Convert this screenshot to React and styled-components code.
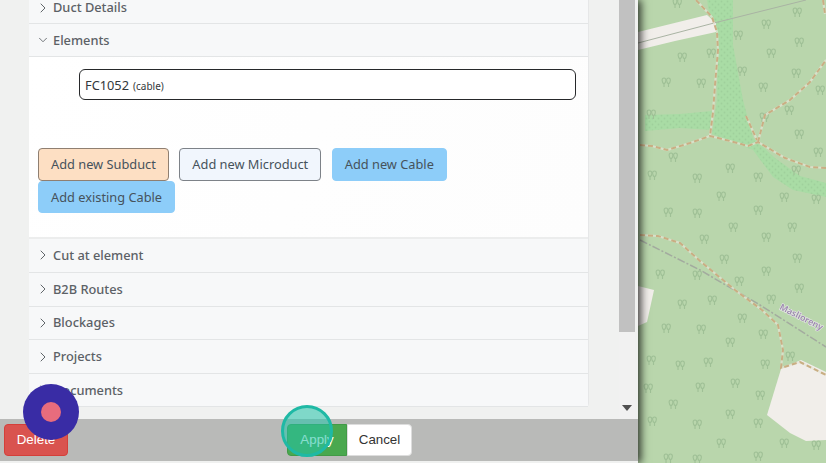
import React from "react";
import styled, { createGlobalStyle } from "styled-components";
import { ChevronRight, ChevronDown } from "lucide-react";

const TREES = [
  [677, 3], [797, 12], [766, 24], [738, 35], [799, 42], [771, 53], [682, 57], [711, 53], [742, 71], [796, 73],
  [666, 82], [701, 83], [763, 87], [820, 90], [651, 114], [789, 110], [764, 117], [799, 134], [818, 152], [673, 157],
  [730, 168], [796, 170], [652, 175], [697, 178], [758, 177], [721, 196], [784, 197], [816, 199], [668, 212], [697, 213],
  [758, 210], [792, 227], [733, 227], [704, 239], [766, 237], [724, 259], [797, 258], [660, 274], [697, 275], [766, 271],
  [739, 281], [799, 288], [771, 299], [682, 304], [712, 300], [742, 318], [666, 328], [701, 329], [763, 334], [730, 342],
  [790, 356], [651, 360], [680, 365], [708, 362], [765, 364], [735, 383], [700, 387], [760, 395], [648, 388], [673, 404],
  [730, 414], [652, 421], [697, 424], [758, 423], [721, 443], [784, 443], [816, 445], [668, 458], [697, 459], [758, 456],
];

const TRACKS = [
  "M696 0 L712 17 L717 32 L718 50 L715 85 L713 112 L710 136",
  "M640 145 L652 146 L667 150 L690 143 L710 136 L730 141 L748 146 L758 142 L785 158 L810 167 L826 168",
  "M758 142 L765 115 L790 100 L810 82 L826 60",
  "M746 116 L757 140",
  "M640 235 L658 236 L680 243 L700 261 L735 290 L762 310 L778 325 L783 350 L781 368 L800 362 L826 375",
  "M823 0 L825 14",
];

const GlobalStyle = createGlobalStyle`
  html, body {
    margin: 0;
    height: 100%;
    overflow: hidden;
    font-family: "Noto Sans", "Open Sans", sans-serif;
  }
`;

const Page = styled.div`
  display: flex;
  width: 826px;
  height: 463px;
  position: relative;
  overflow: hidden;
`;

const Panel = styled.section`
  width: 638px;
  flex: none;
  display: flex;
  flex-direction: column;
  background: #f0f1f0;
  box-shadow: 3px 0 8px rgba(0, 0, 0, 0.75);
  z-index: 1;
`;

const Body = styled.div`
  flex: 1;
  min-height: 0;
  display: flex;
  overflow: hidden;
`;

const Content = styled.div`
  width: 619px;
  flex: none;
  padding-left: 29px;
  box-sizing: border-box;
`;

const Accordion = styled.div`
  width: 560px;
  background: #fff;
  border-radius: 0 0 4px 4px;
  border-right: 1px solid #e6e7e8;
  box-sizing: border-box;
`;

const Header = styled.div`
  height: ${(props) => props.$height || 33.75}px;
  padding-bottom: ${(props) => props.$cut || 0}px;
  box-sizing: border-box;
  display: flex;
  align-items: center;
  gap: 2px;
  padding-left: 6px;
  background: #f7f8f9;
  border-bottom: 1px solid #e3e5e6;
  color: #5c6166;
  font-size: 12.8px;
  line-height: 1;
  font-weight: 500;
`;

const Chevron = styled.span`
  width: 16px;
  flex: none;
  display: flex;
  align-items: center;
  justify-content: center;
  color: #555a5f;
`;

const ElementsBody = styled.div`
  height: 182px;
  box-sizing: border-box;
  padding: 12px 12px 0 9px;
  background: linear-gradient(110deg, #ffffff, #fdfdfd);
  border-bottom: 2px solid #eceded;
`;

const ElementRow = styled.div`
  margin-left: 41px;
  height: 31px;
  box-sizing: border-box;
  display: flex;
  align-items: baseline;
  gap: 4px;
  padding: 7px 5px 0;
  border: 1.5px solid #26282a;
  border-radius: 6px;
  background: #fff;
  color: #33373b;
  font-size: 12.8px;
  line-height: 17px;
`;

const ElementType = styled.span`
  font-size: 10px;
`;

const ButtonRow = styled.div`
  display: flex;
  flex-wrap: wrap;
  column-gap: 10.5px;
  margin-top: 48px;
`;

const VARIANTS = {
  subduct: "background: #fddfc3; border: 1px solid #8f7f71;",
  microduct: "background: #f1f6fd; border: 1px solid #7d8288;",
  cable: "background: #8dcdf9; border: 1px solid #8dcdf9;",
};

const ActionButton = styled.button`
  height: 32.5px;
  box-sizing: border-box;
  padding: 0 12px;
  border-radius: 4px;
  color: #46525b;
  font: 12.8px "Noto Sans", "Open Sans", sans-serif;
  ${(props) => VARIANTS[props.$variant]}
`;

const Scrollbar = styled.div`
  width: 16px;
  flex: none;
  background: #f1f1f1;
  display: flex;
  flex-direction: column;
  align-items: center;
`;

const Thumb = styled.div`
  width: 100%;
  height: 332px;
  background: #c1c1c1;
`;

const ArrowDown = styled.div`
  margin-top: auto;
  margin-bottom: 8px;
  width: 0;
  height: 0;
  border-left: 5px solid transparent;
  border-right: 5px solid transparent;
  border-top: 6px solid #505050;
`;

const Footer = styled.footer`
  height: 42px;
  margin-bottom: 2px;
  flex: none;
  display: flex;
  align-items: center;
  padding-left: 4px;
  background: #b9bab8;
`;

const FooterGroup = styled.div`
  display: flex;
  margin-left: 219px;
`;

const FooterButton = styled.button`
  width: ${(props) => props.$width}px;
  height: 32px;
  box-sizing: border-box;
  padding: 0 0 1px;
  font: 13.33px "Liberation Sans", Arial, sans-serif;
  border-radius: ${(props) => props.$radius || "4px"};
  color: ${(props) => props.$color || "#fff"};
  background: ${(props) => props.$bg};
  border: 1px solid ${(props) => props.$border};
`;

const ClickMarker = styled.div`
  position: absolute;
  z-index: 2;
  left: 23px;
  top: 384px;
  width: 56px;
  height: 56px;
  border-radius: 50%;
  background: #392ca5;
  display: flex;
  align-items: center;
  justify-content: center;
  &::after {
    content: "";
    width: 20px;
    height: 20px;
    border-radius: 50%;
    background: #e86c7d;
  }
`;

const FocusMarker = styled.div`
  position: absolute;
  z-index: 2;
  left: 281px;
  top: 405px;
  width: 52px;
  height: 52px;
  box-sizing: border-box;
  border-radius: 50%;
  border: 3px solid #1fb9a5;
  background: rgba(35, 195, 170, 0.55);
`;

const Map = styled.svg`
  width: 188px;
  height: 463px;
  flex: none;
  display: block;
  background: #b9d6ac;
  filter: blur(0.5px);
`;

const MapLabel = styled.text`
  font: 600 8.8px "Noto Sans", sans-serif;
  fill: #9a88ac;
  stroke: #e8e8e8;
  stroke-width: 1.2px;
  paint-order: stroke;
`;

function Tree({ x, y }) {
  return (
    <g transform={`translate(${x - 5} ${y - 5})`} fill="none" stroke="#9fc096" strokeWidth="1.1">
      <path d="M3 10 V7 M3 7 C0.5 5 0.5 1 3 1 C5.5 1 5.5 5 3 7" />
      <path d="M7.5 10 V7 M7.5 7 C5 5 5 1 7.5 1 C10 1 10 5 7.5 7" />
    </g>
  );
}

function MapView() {
  return (
    <Map viewBox="638 0 188 463">
      <defs>
        <pattern id="wood" width="6" height="6" patternUnits="userSpaceOnUse">
          <rect width="6" height="6" fill="#a9dca5" />
          <circle cx="4.5" cy="4.5" r="0.9" fill="#9fd09c" />
          <circle cx="1.5" cy="1.5" r="0.9" fill="#9fd09c" />
        </pattern>
      </defs>
      <polygon fill="url(#wood)" points="707,0 733,0 733,15 733,45 743,100 753,138 775,158 800,176 826,183 826,197 793,190 773,177 753,150 712,134 717,100 718,40 709,12" />
      <polygon fill="url(#wood)" points="645,115 680,114 712,111 711,130 680,128 645,131" />
      <polygon fill="#f1eeea" points="638,32 707,15 716,23 716,32 675,41 638,50" />
      <polygon fill="#f1eeea" points="638,286 654,290 647,322 638,326" />
      <polygon fill="#f1eeea" points="781,369 801,360 826,372 826,440 806,441 790,433 767,415" />
      <path d="M638 43 L714 23 L806 0" fill="none" stroke="#a9b3a3" strokeWidth="1" />
      <path d="M640 240 L700 270 L760 305 L826 347" fill="none" stroke="#a3ab9f" strokeWidth="1.5" strokeDasharray="8 2 2 2" />
      {TREES.map(([x, y]) => (
        <Tree key={`${x}-${y}`} x={x} y={y} />
      ))}
      {TRACKS.map((d) => (
        <g key={d} fill="none">
          <path d={d} stroke="#e6e4d6" strokeOpacity="0.7" strokeWidth="2.2" />
          <path d={d} stroke="#c9ae83" strokeWidth="2" strokeDasharray="5 3" />
        </g>
      ))}
      <MapLabel transform="translate(779 309) rotate(27)">Maslioreny</MapLabel>
    </Map>
  );
}

function Section({ title, open, height, cut }) {
  const Icon = open ? ChevronDown : ChevronRight;
  return (
    <Header $height={height} $cut={cut}>
      <Chevron>
        <Icon size={open ? 14 : 16} strokeWidth={1.4} />
      </Chevron>
      {title}
    </Header>
  );
}

export default function App() {
  return (
    <Page>
      <GlobalStyle />
      <Panel>
        <Body>
          <Content>
            <Accordion>
              <Section title="Duct Details" height={24} cut={8} />
              <Section title="Elements" height={33} open />
              <ElementsBody>
                <ElementRow>
                  FC1052 <ElementType>(cable)</ElementType>
                </ElementRow>
                <ButtonRow>
                  <ActionButton $variant="subduct">Add new Subduct</ActionButton>
                  <ActionButton $variant="microduct">Add new Microduct</ActionButton>
                  <ActionButton $variant="cable">Add new Cable</ActionButton>
                  <ActionButton $variant="cable">Add existing Cable</ActionButton>
                </ButtonRow>
              </ElementsBody>
              <Section title="Cut at element" />
              <Section title="B2B Routes" />
              <Section title="Blockages" />
              <Section title="Projects" />
              <Section title="Documents" height={33} />
            </Accordion>
          </Content>
          <Scrollbar>
            <Thumb />
            <ArrowDown />
          </Scrollbar>
        </Body>
        <Footer>
          <FooterButton $width={64} $bg="#d9534f" $border="#d43f3a">Delete</FooterButton>
          <FooterGroup>
            <FooterButton $width={60} $bg="#4aa84f" $border="#429a47" $radius="4px 0 0 4px">Apply</FooterButton>
            <FooterButton $width={65} $bg="#fff" $border="#dddddd" $color="#333" $radius="0 4px 4px 0">Cancel</FooterButton>
          </FooterGroup>
        </Footer>
      </Panel>
      <MapView />
      <ClickMarker />
      <FocusMarker />
    </Page>
  );
}
